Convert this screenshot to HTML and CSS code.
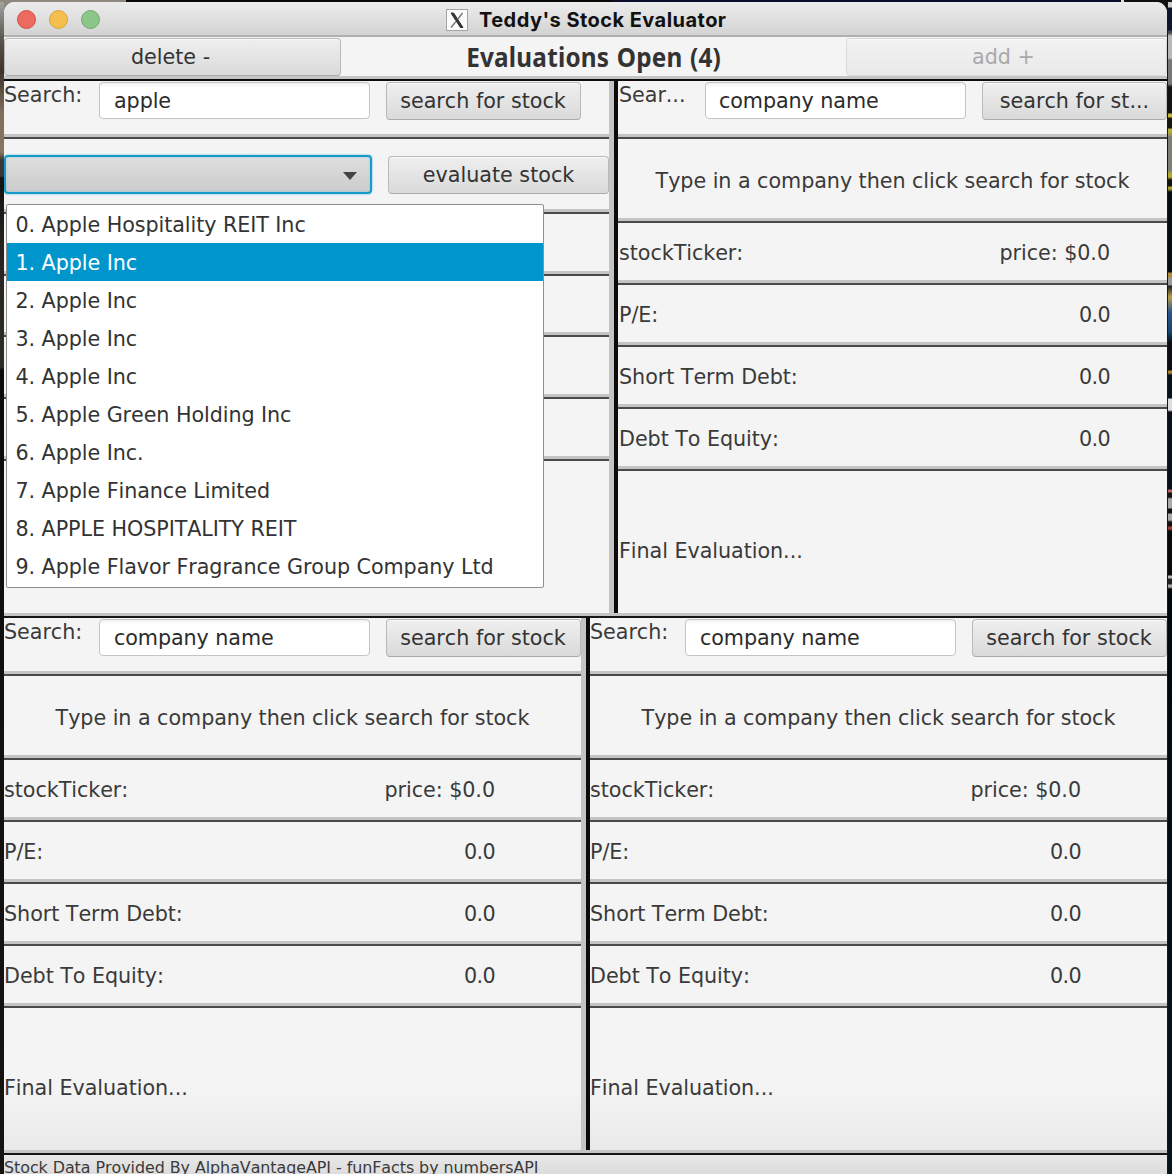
FILE: index.html
```html
<!DOCTYPE html>
<html lang="en">
<head>
<meta charset="utf-8">
<title>Teddy's Stock Evaluator</title>
<link rel="stylesheet" href="styles.css">
</head>
<body>
<div class="desktop">
<div class="edge edge-left"></div>
<main class="window">
  <header class="titlebar">
    <div class="lights"><i class="light red"></i><i class="light yellow"></i><i class="light green"></i></div>
    <svg class="xicon" viewBox="0 0 22 22"><rect x=".5" y=".5" width="21" height="21" fill="#fbfbfb" stroke="#a5a5a5"/><path d="M5 4h2.6L17 18.500h-2.600z" fill="#333" stroke="#333"/><path d="M16.500 4 11.500 10.500M10 12.500 5 18.500" stroke="#777" stroke-width="1.400"/></svg>
    <h1>Teddy's Stock Evaluator</h1>
  </header>
  <div class="toolbar">
    <button class="btn delete">delete -</button>
    <h2><span>Evaluations Open (4)</span></h2>
    <button class="btn add" disabled>add +</button>
  </div>
  <div class="pair top">
    <section class="panel picking">
      <div class="row search"><label>Search:</label><div class="field">apple</div><button class="btn">search for stock</button></div>
      <div class="row choose">
        <div class="combo"><i class="arrow"></i></div><button class="btn evaluate">evaluate stock</button>
        <ul class="menu">
          <li>0. Apple Hospitality REIT Inc</li>
          <li class="selected">1. Apple Inc</li>
          <li>2. Apple Inc</li>
          <li>3. Apple Inc</li>
          <li>4. Apple Inc</li>
          <li>5. Apple Green Holding Inc</li>
          <li>6. Apple Inc.</li>
          <li>7. Apple Finance Limited</li>
          <li>8. APPLE HOSPITALITY REIT</li>
          <li>9. Apple Flavor Fragrance Group Company Ltd</li>
        </ul>
      </div>
      <div class="row stat"></div><div class="row stat"></div><div class="row stat"></div><div class="row stat"></div>
    </section>
    <section class="panel narrow">
      <div class="row search"><label>Sear...</label><div class="field">company name</div><button class="btn">search for st...</button></div>
      <div class="row hint"><span>Type in a company then click search for stock</span></div>
      <div class="row stat"><span>stockTicker:</span><span>price: $0.0</span></div>
      <div class="row stat"><span>P/E:</span><span class="num">0.0</span></div>
      <div class="row stat"><span>Short Term Debt:</span><span class="num">0.0</span></div>
      <div class="row stat"><span>Debt To Equity:</span><span class="num">0.0</span></div>
      <div class="final">Final Evaluation...</div>
    </section>
  </div>
  <div class="pair bottom">
    <section class="panel">
      <div class="row search"><label>Search:</label><div class="field">company name</div><button class="btn">search for stock</button></div>
      <div class="row hint"><span>Type in a company then click search for stock</span></div>
      <div class="row stat"><span>stockTicker:</span><span>price: $0.0</span></div>
      <div class="row stat"><span>P/E:</span><span class="num">0.0</span></div>
      <div class="row stat"><span>Short Term Debt:</span><span class="num">0.0</span></div>
      <div class="row stat"><span>Debt To Equity:</span><span class="num">0.0</span></div>
      <div class="final">Final Evaluation...</div>
    </section>
    <section class="panel">
      <div class="row search"><label>Search:</label><div class="field">company name</div><button class="btn">search for stock</button></div>
      <div class="row hint"><span>Type in a company then click search for stock</span></div>
      <div class="row stat"><span>stockTicker:</span><span>price: $0.0</span></div>
      <div class="row stat"><span>P/E:</span><span class="num">0.0</span></div>
      <div class="row stat"><span>Short Term Debt:</span><span class="num">0.0</span></div>
      <div class="row stat"><span>Debt To Equity:</span><span class="num">0.0</span></div>
      <div class="final">Final Evaluation...</div>
    </section>
  </div>
  <footer>Stock Data Provided By AlphaVantageAPI - funFacts by numbersAPI</footer>
</main>
<div class="edge edge-right"></div>
</div>
</body>
</html>
```
FILE: styles.css
```css
* { box-sizing: border-box; }
body { margin: 0; overflow: hidden; background: #111; }
h1, h2, ul { margin: 0; padding: 0; }
.desktop {
  display: grid;
  grid-template-columns: 4px 1163px 5px;
  width: 1172px;
  height: 1174px;
  padding-top: 2px;
  background: linear-gradient(90deg, #8d8880 0 126px, #08070c 126px 612px, #0b0b2c 612px 1121px, #ddd 1121px 1124px, #111 1124px) 0 0 / 100% 12px no-repeat #14110f;
  font: 20.7px/24px "DejaVu Sans", sans-serif;
  font-kerning: none;
  letter-spacing: -.05px;
  color: #3a3a3a;
}
.edge-left { background: linear-gradient(#a3a29f 0, #55504a 40px, #3d332b 70px, #806d59 110px, #8a7763 150px, #3a3836 158px, #3a3836 174px, #141210 176px, #27221e 240px, #302c28 365px, #0e0d0c 368px, #161412); }
.edge-right {
  border-left: 1px solid #15171a;
  background: linear-gradient(#ccc 0 5px, #10152f 6px 28px, #445 29px 31px, #b8b8b8 34px 56px, #777 58px 82px, #12130f 85px 111px, #c5b82f 112px 115px, #17170f 116px 126px, #b8ad31 127px 130px, #7a8078 135px 168px, #b6ab2e 172px 175px, #11130f 178px 184px, #aaa02c 185px 187px, #080d12 190px 270px, #b28a35 271px 274px, #999 277px 283px, #20201c 284px, #b79f49 295px, #2b558d 310px, #174471 330px, #0b0f14 340px 368px, #ae842f 369px 371px, #08121b 373px 396px, #ddd 397px 408px, #0a1118 410px 487px, #b66 488px 490px, #111 491px 495px, #aaa 497px 506px, #111 507px 511px, #aaa 512px 518px, #111 520px 524px, #a43a3a 525px 527px, #07090c 529px 573px, #bbb 574px 576px, #222 577px 582px, #aaa 583px 585px, #02070c 587px, #06141b);
}
.window {
  display: flex;
  flex-direction: column;
  height: 1172px;
  overflow: hidden;
  border-radius: 11px 11px 0 0;
  background: #f4f4f4;
}
.titlebar {
  display: flex;
  align-items: center;
  flex: 0 0 35px;
  border-bottom: 2px solid #b0b0b0;
  background: linear-gradient(#ececec, #d3d3d3);
}
.lights { display: flex; gap: 13px; width: 442px; padding: 1px 0 0 13px; }
.light { width: 19px; height: 19px; border: 1px solid; border-radius: 50%; }
.red { background: #ed6a5f; border-color: #d14e43; }
.yellow { background: #f5bf4f; border-color: #d9a23a; }
.green { background: #8cc688; border-color: #6fa96c; }
.xicon { width: 22px; height: 22px; margin-top: 3px; }
h1 { margin: 2px 0 0 11px; font: 700 20px/30px Inter, sans-serif; letter-spacing: .46px; color: #111; white-space: nowrap; }
.toolbar {
  display: grid;
  grid-template-columns: 337px 1fr 321px;
  flex: 0 0 44px;
  padding-top: 1px;
  border-bottom: 2px solid #0c0c0c;
  box-shadow: inset 0 -3px #c4c4c4;
}
h2 { margin-left: 0; text-align: center; font: 700 27px/38px "Noto Sans", sans-serif; color: #333; white-space: nowrap; }
h2 span { display: inline-block; transform: scaleX(.9); letter-spacing: .25px; word-spacing: 1px; }
.btn {
  height: 38px;
  padding: 0;
  border: 1px solid #b9b9b9;
  border-bottom-color: #aaa;
  border-radius: 4px;
  background: linear-gradient(#efefef, #dadada);
  box-shadow: inset 0 1px #fafafa;
  font: inherit;
  font-kerning: none;
  color: #333;
  text-align: center;
  white-space: nowrap;
}
.delete { padding-right: 4px; }
.add { padding-right: 6px; background: linear-gradient(#f2f2f2, #e9e9e9); border-color: #d9d9d9; color: #a9a9a9; }
.pair {
  display: grid;
  column-gap: 4px;
  flex: 0 0 537px;
  border-bottom: 2px solid #161616;
  background: linear-gradient(#c4c4c4, #c4c4c4) 0 100% / 100% 3px no-repeat #0b0b0b;
}
.pair .panel { margin-bottom: 3px; }
.top { grid-template-columns: 610px 549px; }
.bottom { grid-template-columns: 582px 577px; }
.panel { display: flex; flex-direction: column; background: #f4f4f4; }
.panel:first-child { border-right: 5px solid #c4c4c4; }
.bottom .panel { background: linear-gradient(#f4f4f4 88%, #e9e9e9); }
.row { display: flex; border-bottom: 2px solid #4a4a4a; box-shadow: inset 0 -3px #c4c4c4; }
.search { flex: 0 0 58px; padding-top: 1px; }
.search label { width: 95px; padding-top: 1px; }
.search .btn { width: 195px; padding-right: 1px; }
.field {
  width: 271px;
  height: 37px;
  margin-right: 16px;
  padding: 6px 14px;
  border: 1px solid #c4c4c4;
  border-radius: 4px;
  background: linear-gradient(#f0f0f0, #fff 4px);
  letter-spacing: -.08px;
  color: #2b2b2b;
}
.narrow .search label { width: 87px; padding-left: 1px; }
.narrow .field { width: 261px; padding-left: 13px; }
.narrow .search .btn { width: 185px; padding-right: 0; }
.hint { flex: 0 0 84px; align-items: center; justify-content: center; padding-top: 1px; }
.stat { flex: 0 0 62px; align-items: center; justify-content: space-between; padding: 0 86px 1px 0; }
.num { letter-spacing: -.6px; }
.narrow .stat { padding-right: 57px; padding-left: 1px; }
.picking .stat:nth-child(4) { flex-basis: 61px; }
.final { flex: 1; display: flex; align-items: center; padding-top: 18px; }
.narrow .final { padding-left: 1px; }
.choose { position: relative; flex: 0 0 75px; padding-top: 16px; gap: 16px; }
.combo {
  display: flex;
  align-items: center;
  justify-content: flex-end;
  width: 368px;
  height: 39px;
  padding-right: 13px;
  border: 2px solid #169bc9;
  border-radius: 4px;
  background: linear-gradient(#dfdfdf, #cbcbcb);
  box-shadow: 0 0 2px #47b7dd, inset 0 0 2px #8cc8dc;
}
.arrow { border: 7px solid transparent; border-top: 8px solid #444; border-bottom: 0; margin-top: 2px; }
.evaluate { width: 221px; margin-top: 1px; }
.menu {
  position: absolute;
  z-index: 2;
  top: 65px;
  left: 2px;
  width: 538px;
  height: 384px;
  border: 1px solid #8f8f8f;
  border-radius: 2px;
  background: #fff;
  list-style: none;
  letter-spacing: -.07px;
  color: #333;
}
.menu li { height: 38px; padding: 8px 8.500px 6px; white-space: nowrap; }
.menu .selected { background: #0096cb; color: #fff; }
footer {
  flex: 1;
  padding-top: 2px;
  background: linear-gradient(#e8e8e8, #d9d9d9);
  font-size: 15.9px;
  line-height: 22px;
  white-space: nowrap;
}
```
